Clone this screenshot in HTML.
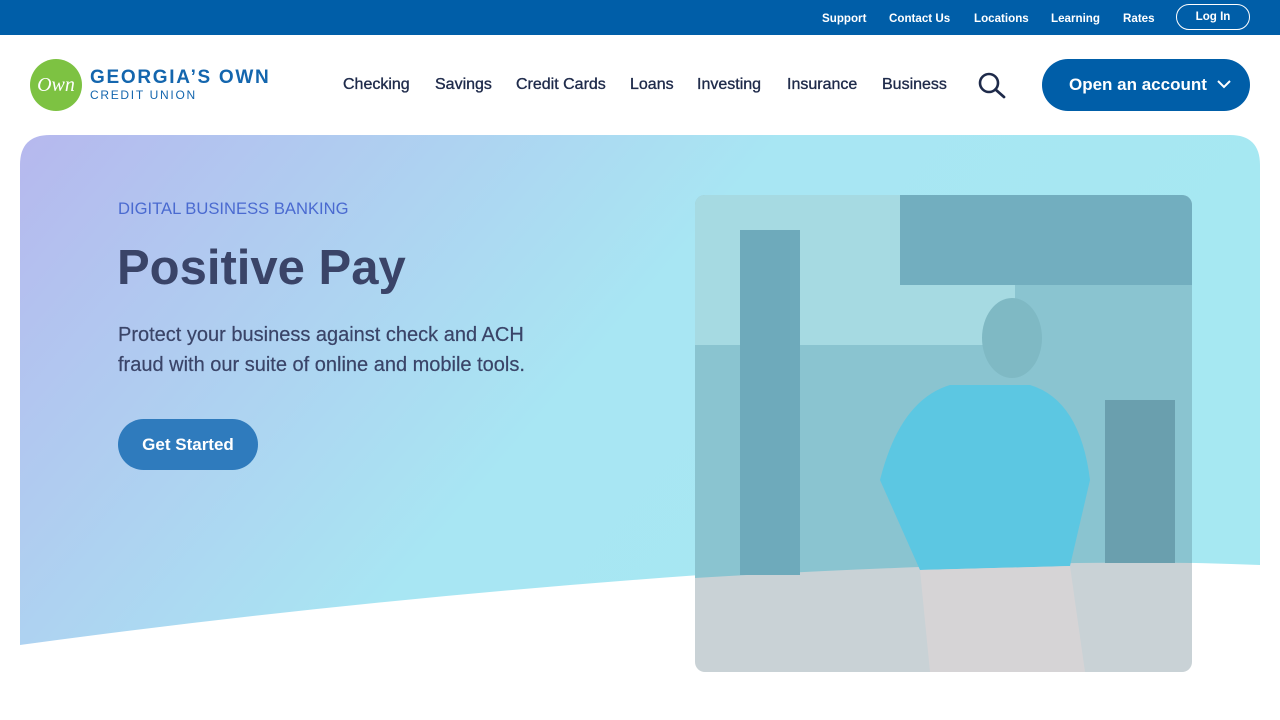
<!DOCTYPE html>
<html><head><meta charset="utf-8"><style>
*{margin:0;padding:0;box-sizing:border-box}
body{width:1280px;height:720px;overflow:hidden;background:#fff;font-family:"Liberation Sans",sans-serif;position:relative}
.top{height:35px;background:#005ea8;position:relative}
.top a{position:absolute;top:12px;color:#fff;font-size:11.6px;font-weight:bold}
.login{position:absolute;left:1176px;top:4px;width:74px;height:26px;border:1.5px solid #fff;border-radius:13px;color:#fff;font-size:11.6px;font-weight:bold;text-align:center;line-height:23px}
.nav a{position:absolute;top:76px;color:#1e2a4a;font-size:16px;-webkit-text-stroke:.35px #1e2a4a}
.btn{position:absolute;left:1042px;top:59px;width:208px;height:52px;border-radius:26px;background:#005ea8;color:#fff;font-size:17px;font-weight:bold;line-height:52px;padding-left:27px}
</style></head><body>
<div class="top">
<a style="left:822px">Support</a><a style="left:889px">Contact Us</a><a style="left:974px">Locations</a><a style="left:1051px">Learning</a><a style="left:1123px">Rates</a>
<div class="login">Log In</div>
</div>
<div style="position:absolute;left:30px;top:59px;width:52px;height:52px;border-radius:50%;background:#7dc242;color:#fff;font-family:'Liberation Serif',serif;font-style:italic;font-size:20px;text-align:center;line-height:52px">Own</div>
<div style="position:absolute;left:90px;top:67px;color:#1466ae;font-size:19px;font-weight:bold;letter-spacing:1.7px">GEORGIA’S OWN</div>
<div style="position:absolute;left:90px;top:88px;color:#1466ae;font-size:12px;letter-spacing:1.7px">CREDIT UNION</div>
<div class="nav"><a style="left:343px">Checking</a><a style="left:435px">Savings</a><a style="left:516px">Credit Cards</a><a style="left:630px">Loans</a><a style="left:697px">Investing</a><a style="left:787px">Insurance</a><a style="left:882px">Business</a></div>
<svg style="position:absolute;left:977px;top:71px" width="30" height="28"><circle cx="12" cy="12" r="9" fill="none" stroke="#1e2a4a" stroke-width="2.6"/><line x1="18.5" y1="18.5" x2="27" y2="26" stroke="#1e2a4a" stroke-width="2.8" stroke-linecap="round"/></svg>
<div class="btn">Open an account<svg style="position:absolute;left:175px;top:20px" width="14" height="10"><path d="M1 2 L7 8 L13 2" fill="none" stroke="#fff" stroke-width="2"/></svg></div>

<svg style="position:absolute;left:0;top:0" width="1280" height="720">
<defs>
<linearGradient id="g" x1="0" y1="0" x2="1" y2="0.35"><stop offset="0" stop-color="#b6b8ee"/><stop offset="0.55" stop-color="#a8e6f3"/><stop offset="1" stop-color="#a6e8f2"/></linearGradient>
<clipPath id="pc"><rect x="695" y="195" width="497" height="477" rx="10"/></clipPath>
</defs>
<path d="M20 165 Q20 135 50 135 L1230 135 Q1260 135 1260 165 L1260 565 Q1000 555 700 575 Q350 600 20 645 Z" fill="url(#g)"/>
<g clip-path="url(#pc)">
<rect x="695" y="195" width="497" height="477" fill="#c9d2d6"/>
<path d="M695 195 H1192 V563 Q1000 560 695 578 Z" fill="#8ac4d0"/>
<rect x="695" y="195" width="320" height="150" fill="#a6dae2"/>
<rect x="900" y="195" width="292" height="90" fill="#72aebf"/>
<rect x="740" y="230" width="60" height="345" fill="#6eaabb"/>
<rect x="1105" y="400" width="70" height="163" fill="#6a9fae"/>
<path d="M880 480 Q900 400 950 385 L1030 385 Q1080 400 1090 480 L1070 566 L920 570 Z" fill="#5cc7e2"/>
<ellipse cx="1012" cy="338" rx="30" ry="40" fill="#7fb9c4"/>
<path d="M920 570 L1070 566 L1085 672 L930 672 Z" fill="#d6d4d6"/>
</g>
</svg>

<div style="position:absolute;left:118px;top:199px;color:#4a6ad0;font-size:16.6px">DIGITAL BUSINESS BANKING</div>
<div style="position:absolute;left:117px;top:240px;color:#3a4468;font-size:49px;font-weight:bold">Positive Pay</div>
<div style="position:absolute;left:118px;top:320px;color:#3a4468;font-size:20px;line-height:30px;-webkit-text-stroke:.2px #3a4468">Protect your business against check and ACH<br>fraud with our suite of online and mobile tools.</div>
<div style="position:absolute;left:118px;top:419px;width:140px;height:51px;border-radius:26px;background:#2f7bbd;color:#fff;font-size:17px;font-weight:bold;text-align:center;line-height:51px">Get Started</div>
</body></html>
